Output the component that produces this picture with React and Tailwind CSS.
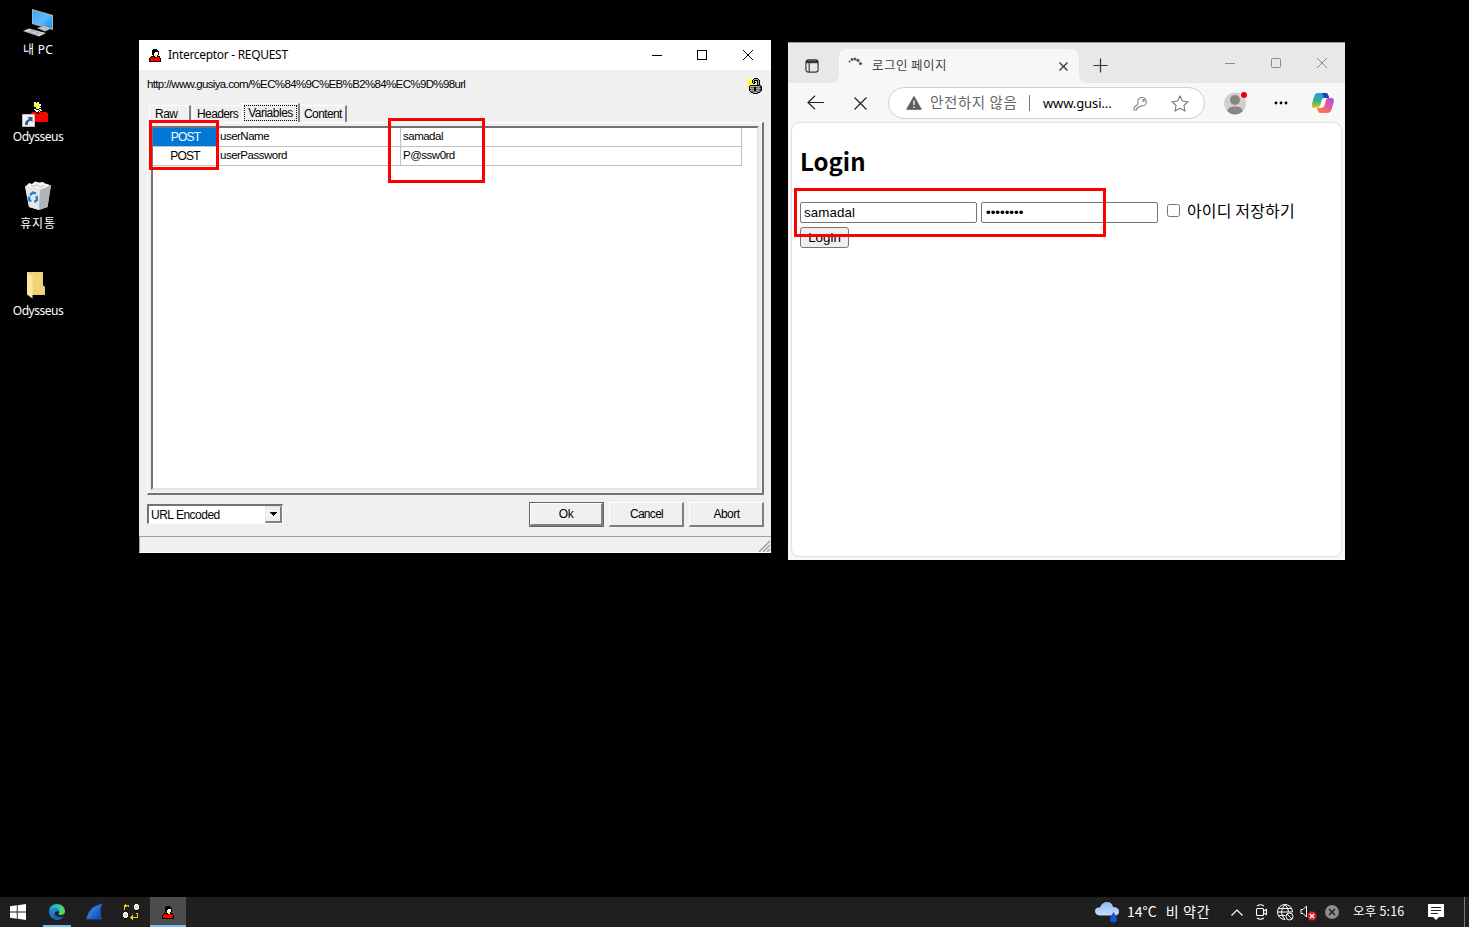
import React from "react";

const PALETTE = {
  k: "#000000",
  r: "#ff0000",
  y: "#ffff00",
  w: "#ffffff",
  g: "#a9a9a9",
  d: "#6e6e6e",
  c: "#e8dfb8",
  o: "#f0c419",
};

function Pixels({ rows, className }) {
  return (
    <svg
      className={className}
      width={rows[0].length}
      height={rows.length}
      viewBox={`0 0 ${rows[0].length} ${rows.length}`}
      shapeRendering="crispEdges"
    >
      {rows.flatMap((row, y) =>
        row.split("").map((ch, x) =>
          PALETTE[ch] ? <rect key={`${x}-${y}`} x={x} y={y} width="1" height="1" fill={PALETTE[ch]} /> : null
        )
      )}
    </svg>
  );
}

const PERSON = [
  "....kkkk....",
  "...kkkkkk...",
  "...kkkkkkk..",
  "...kkkwwwk..",
  "...kkwwwwk..",
  "...kkwywwk..",
  "....kwyyk...",
  "..kkkkyykkk.",
  ".krrrkkrrrk.",
  "krrrrrrrrrrk",
  "krrrrrrrrrrk",
  "krrrrrrrrrrk",
  "kkkkkkkkkkkk",
];

const LOCK = [
  "...y...kkkk....",
  "y..y..kggggk...",
  ".y.y.kgkkkkgk..",
  "..yyykgkyykgk..",
  ".yyyykgkk.kgk..",
  "yyyyyykk..kgk..",
  "..yyyyy...kgk..",
  ".y.kkkkkkkkkkk.",
  "y.kggggggggggdk",
  "..kddddkkddddkk",
  "..kggggkkggggdk",
  "..kddddkkddddkk",
  "..kggggkkgggddk",
  "...kdddddddddk.",
  "....kkggggdkk..",
  "......kkkkk....",
];

const PROXY = [
  "..o.........www.",
  ".ooooo.....wcccw",
  ".ooo.o.....wcccw",
  ".o.........wcccw",
  ".o.........wcccw",
  ".o..........wcw.",
  "............kkk.",
  "................",
  ".www............",
  "wcccw........oo.",
  "wcccw.........o.",
  "wcccw....o....o.",
  "wcccw...oo....o.",
  ".wcw...oooooooo.",
  ".kkk....oo......",
  ".........o......",
];

const HERO = [
  "....ww.ww.........",
  "....wwyyw.........",
  "....yywyyww.......",
  "....yyyyyww.......",
  "....wyyyyy........",
  "......yywww.......",
  "......yyw.........",
  "....ww...ww.......",
  ".....wwww.ww......",
  "......ww.w........",
  "..rrrr...rrrrrrrr.",
  ".rrrrrr..rrrrrrrrr",
  "rrrrrrrrrrrrrrrrrr",
  "rrrrrrrrrrrrrrrrrr",
  "rrrrrrrrrrrrrrrrrr",
  "rrrrrrrrrrrrrrrrrr",
  "rrrrrrrrrrrrrrrrrr",
  "rrrrrrrrrrrrrrrrrr",
  "rrrrrrrrrrrrrrrrrr",
  "rrrrrrrrrrrrrrrrrr",
];

function PcIcon() {
  return (
    <svg width="32" height="30" viewBox="22 8 32 30">
      <defs>
        <linearGradient id="scr" x1="0" y1="0" x2="1" y2="1">
          <stop offset="0" stopColor="#3aa0f0" />
          <stop offset="0.5" stopColor="#5cbcff" />
          <stop offset="1" stopColor="#1d8ee8" />
        </linearGradient>
      </defs>
      <path d="M32 9L53 15V30L32 24Z" fill="#9fb4c4" />
      <path d="M33 10.5L52 16V28.5L33 23Z" fill="url(#scr)" />
      <path d="M37 28l7-2 7 2.500-6 3z" fill="#b9c0c6" />
      <path d="M23 31l6-2.500 17 4.500-7 3.500z" fill="#d5d8db" />
      <path d="M26 31.500l13 3.500M29 30l13 3.500M29 33l5-2.500M34 34.500l5-2.500" stroke="#8f979d" strokeWidth=".6" />
    </svg>
  );
}

function BinIcon() {
  return (
    <svg width="28" height="30" viewBox="24 182 28 30">
      <path d="M25 187L51 186L47.500 208L39 211L29 208Z" fill="#cfd0d2" />
      <path d="M25 187L40 191L39 211L29 208Z" fill="#e6e7e8" />
      <path d="M40 191L51 186L47.500 208L39 211Z" fill="#b3b4b7" />
      <path d="M26 187l3-3 3 1 3-2.500 4 1 4-.5 2 1.500 4 1-1 2-8 3z" fill="#f3f4f4" />
      <path d="M31 186l3 1.500 3-2 3 3 4-2" stroke="#a3a6a9" strokeWidth=".8" fill="none" />
      <path d="M30 196l3-2.500 3 1M36.500 197l.5 4-2.500 2M31 202.500l-2-2 .5-3" stroke="#1583d8" strokeWidth="2.300" fill="none" />
    </svg>
  );
}

function FolderIcon() {
  return (
    <svg width="20" height="28" viewBox="26 271 20 28">
      <path d="M27 272H43V285L45 287V295H31Z" fill="#f0cc6c" />
      <path d="M32 273H42.500V294H32Z" fill="#f2d27a" />
      <path d="M27 272L32.500 276V298.500L27 294.500Z" fill="#ffe9a2" />
    </svg>
  );
}

function DesktopLabel({ children, className }) {
  return <span className={"whitespace-nowrap text-[12px] leading-[16px] text-white " + (className || "")}>{children}</span>;
}

const MS = "font-['Liberation_Sans',sans-serif] whitespace-nowrap text-black ";

function ClassicButton({ label, primary, spacing }) {
  return (
    <div className={"flex h-[25px] w-[75px] " + (primary ? "border border-[#646464]" : "")}>
      <div className={MS + "flex flex-1 items-center justify-center border-t border-l border-r-2 border-b-2 border-t-white border-l-white border-r-[#808080] border-b-[#808080] bg-[#f0f0f0] pb-px text-[12px] " + spacing}>
        {label}
      </div>
    </div>
  );
}

function Interceptor() {
  return (
    <section className="absolute left-[139px] top-[40px] flex h-[513px] w-[632px] flex-col bg-[#f0f0f0]">
      <header className="flex h-[30px] shrink-0 items-center bg-white pl-[10px]">
        <Pixels rows={PERSON} />
        <h1 className="ml-[7px] flex-1 whitespace-nowrap text-[12px] leading-[16px] tracking-[-0.3px] text-black">Interceptor - REQUEST</h1>
        <svg width="103" height="12" viewBox="0 0 103 12" className="mr-[17px]" fill="none" stroke="#000" shapeRendering="crispEdges">
          <path d="M1 6.500H11M46.500 1.500H55.500V10.500H46.500Z" />
          <path d="M92 1L102 11M102 1L92 11" shapeRendering="auto" />
        </svg>
      </header>
      <div className="flex h-[33px] shrink-0 items-center justify-between pl-[8px] pr-[9px]">
        <span className={MS + "-mt-[3px] text-[11.5px] tracking-[-0.64px]"}>http://www.gusiya.com/%EC%84%9C%EB%B2%84%EC%9D%98url</span>
        <Pixels rows={LOCK} className="-mt-px" />
      </div>
      <nav className="flex h-[19px] shrink-0 items-end pl-[10px] text-[12px]">
        <div className={MS + "flex h-[17px] w-[42px] items-center border-l border-r-2 border-t border-l-white border-t-white border-r-[#808080] pl-[5px] tracking-[-0.5px]"}>Raw</div>
        <div className={MS + "ml-px flex h-[17px] w-[50px] items-center border-l border-t border-white pl-[4px] tracking-[-0.6px]"}>Headers</div>
        <div className="flex h-[19px] w-[58px] border-l border-r-2 border-t border-l-white border-r-[#808080] border-t-white p-px">
          <div className={MS + "flex h-[16px] flex-1 items-center justify-center border border-dotted border-black pb-px tracking-[-0.5px]"}>Variables</div>
        </div>
        <div className={MS + "flex h-[17px] w-[47px] items-center border-r-2 border-t border-r-[#808080] border-t-white pl-[4px] tracking-[-0.6px]"}>Content</div>
      </nav>
      <div className="ml-[8px] flex h-[373px] w-[617px] shrink-0 border-b-2 border-l border-r-2 border-t border-b-[#737373] border-l-white border-r-[#737373] border-t-white p-[3px]">
        <div className="flex flex-1 flex-col border-2 border-b-[#e3e3e3] border-l-[#737373] border-r-[#e3e3e3] border-t-[#737373] bg-white">
          {[
            ["userName", "samadal", true],
            ["userPassword", "P@ssw0rd", false],
          ].map(([name, value, selected]) => (
            <div key={name} className={MS + "flex h-[19px] w-[589px] border-b border-r border-[#c0c0c0] text-[11.5px]"}>
              <div className={"flex w-[64px] items-center justify-center pl-px text-[12px] tracking-[-0.8px] " + (selected ? "bg-[#0078d7] text-white" : "border-r border-[#c0c0c0]")}>POST</div>
              <div className="flex w-[184px] items-center border-r border-[#c0c0c0] pl-[3px] tracking-[-0.5px]">{name}</div>
              <div className="flex items-center pl-[2px] tracking-[-0.5px]">{value}</div>
            </div>
          ))}
        </div>
      </div>
      <div className="flex h-[41px] shrink-0 items-start pl-[8px] pt-[7px]">
        <div className="mt-[2px] flex h-[20px] w-[136px] border-b border-l-2 border-r border-t-2 border-b-white border-l-[#737373] border-r-white border-t-[#737373] bg-white">
          <span className={MS + "flex flex-1 items-center pl-[2px] text-[12px] tracking-[-0.5px]"}>URL Encoded</span>
          <span className="flex w-[17px] items-center justify-center border-b-2 border-l border-r-2 border-t border-b-[#808080] border-l-[#e3e3e3] border-r-[#808080] border-t-[#e3e3e3] bg-[#f0f0f0]">
            <svg width="7" height="4" viewBox="0 0 7 4" shapeRendering="crispEdges"><path d="M0 0H7V1H6V2H5V3H4V4H3V3H2V2H1V1H0Z" /></svg>
          </span>
        </div>
        <div className="ml-[246px] flex gap-[5px]">
          <ClassicButton label="Ok" primary spacing="tracking-[-0.5px]" />
          <ClassicButton label="Cancel" spacing="tracking-[-0.7px] pl-px" />
          <ClassicButton label="Abort" spacing="tracking-[-0.5px] pl-px" />
        </div>
      </div>
      <footer className="flex h-[17px] items-end justify-end border-b border-l border-t border-b-white border-l-[#a0a0a0] border-t-[#a0a0a0]">
        <svg width="13" height="12" viewBox="0 0 13 12" stroke="#a0a0a0" strokeWidth="1.500"><path d="M1 12L12 1M5 12L12 5M9 12L12 9" /></svg>
      </footer>
    </section>
  );
}

function CopilotIcon() {
  return (
    <svg width="24" height="22" viewBox="0 0 24 22">
      <defs>
        <linearGradient id="cpa" x1="0" y1="0" x2="0" y2="1">
          <stop offset="0" stopColor="#1c9cf0" /><stop offset=".55" stopColor="#35b27d" /><stop offset="1" stopColor="#f3c914" />
        </linearGradient>
        <linearGradient id="cpb" x1="1" y1="0" x2="0" y2="1">
          <stop offset="0" stopColor="#a64df0" /><stop offset=".5" stopColor="#ef5a86" /><stop offset="1" stopColor="#ff8a35" />
        </linearGradient>
      </defs>
      <path d="M7 1H15Q17 1 18 6H13Q11 6 10 10L9 14Q8 16 5 16H3Q0 16 1 12L3 5Q4 1 7 1Z" fill="url(#cpa)" />
      <path d="M11 1H15Q17 1 18 6H13Z" fill="#1946b9" />
      <path d="M17 6H20Q24 6 22.500 11L21 16Q20 21 16 21H9Q7 21 6 16H10Q13 16 14 12L15 8Q15.500 6 17 6Z" fill="url(#cpb)" />
    </svg>
  );
}

function Browser() {
  return (
    <section className="absolute left-[788px] top-[42px] flex h-[518px] w-[557px] flex-col bg-[#f7f7f7] font-['Noto_Sans','Noto_Sans_CJK_KR',sans-serif]">
      <header className="flex h-[41px] shrink-0 items-end border-t border-[#9b9b9b] bg-[#f7f7f7]">
        <div className="flex h-[40px] w-[51px] items-center rounded-br-[8px] bg-[#e8e8e8] pl-[17px] pt-[6px]">
          <svg width="14" height="14" viewBox="0 0 15 15" fill="none" stroke="#333" strokeWidth="1.200">
            <rect x="1" y="1" width="13" height="13" rx="2.500" /><path d="M1 3H14" strokeWidth="3" /><path d="M4.500 4V14" />
          </svg>
        </div>
        <div className="flex h-[40px] w-[240px] bg-[#e8e8e8] pt-[6px]">
          <div className="flex flex-1 items-center rounded-t-[8px] bg-[#f7f7f7] pl-[9px]">
            <svg width="16" height="16" viewBox="0 0 16 16" className="-mt-[2px]" fill="#555">
              <circle cx="1.500" cy="4.500" r="1" /><circle cx="4" cy="2.500" r="1.400" /><circle cx="7" cy="2" r="1.500" /><circle cx="10" cy="3.300" r="1.600" /><circle cx="12.500" cy="6.500" r="1.600" />
            </svg>
            <span className="-mt-[2px] ml-[8px] flex-1 whitespace-nowrap font-['Noto_Sans_CJK_KR'] text-[12.500px] leading-[16px] tracking-[0.45px] text-[#444]">로그인 페이지</span>
            <svg width="9" height="9" viewBox="0 0 9 9" className="mr-[11px]" stroke="#333" strokeWidth="1.200"><path d="M.5.5L8.500 8.500M8.500.5L.5 8.500" /></svg>
          </div>
        </div>
        <div className="flex h-[40px] flex-1 items-center rounded-bl-[8px] bg-[#e8e8e8] pl-[14px]">
          <svg width="15" height="15" viewBox="0 0 15 15" className="mt-[5px]" stroke="#333" strokeWidth="1.200"><path d="M7.500.5V14.500M.5 7.500H14.500" /></svg>
          <svg width="104" height="12" viewBox="0 0 104 12" className="ml-[117px]" fill="none" stroke="#8a8a8a">
            <path d="M0 6.500H10" /><rect x="46.500" y="1.500" width="9" height="9" rx="1" /><path d="M92 1L102 11M102 1L92 11" />
          </svg>
        </div>
      </header>
      <div className="flex h-[40px] shrink-0 items-center pl-[19px]">
        <svg width="18" height="15" viewBox="0 0 18 15" className="-mt-px" fill="none" stroke="#222" strokeWidth="1.200"><path d="M17 7.500H1M8 .8L1 7.500L8 14.200" /></svg>
        <svg width="13" height="13" viewBox="0 0 13 13" className="ml-[29px]" stroke="#222" strokeWidth="1.200"><path d="M.5.5L12.500 12.500M12.500.5L.5 12.500" /></svg>
        <div className="ml-[21px] flex h-[32px] w-[317px] items-center rounded-full border border-[#d0d0d0] bg-white pl-[17px]">
          <svg width="16" height="14" viewBox="0 0 16 14"><path d="M8 .5L15.300 13.300H.7Z" fill="#5f5f5f" stroke="#5f5f5f" strokeLinejoin="round" /><path d="M8 4.500V9M8 10.500V12" stroke="#fff" strokeWidth="1.300" /></svg>
          <span className="-mt-[2px] ml-[8px] w-[99px] whitespace-nowrap font-['Noto_Sans_CJK_KR'] text-[14.500px] leading-[18px] tracking-[0.6px] text-[#666]">안전하지 않음</span>
          <span className="h-[16px] w-px bg-[#777]" />
          <span className="ml-[13px] w-[90px] whitespace-nowrap text-[13px] leading-[18px] tracking-[-0.1px] text-black">www.gusi...</span>
          <svg width="15" height="15" viewBox="0 0 15 15" fill="none" stroke="#888" strokeWidth="1.100">
            <path d="M5.200 7.600A4.300 4.300 0 1 1 7.600 9.800L6.500 10.800H5V12.300H3.500V14H1V11.500Z" strokeLinejoin="round" /><circle cx="10.500" cy="4.500" r=".9" />
          </svg>
          <svg width="18" height="17" viewBox="0 0 18 17" className="ml-[23px]" fill="none" stroke="#777" strokeWidth="1.100" strokeLinejoin="round">
            <path d="M9 1L11.400 6L17 6.700L12.900 10.500L14 16L9 13.300L4 16L5.100 10.500L1 6.700L6.600 6Z" />
          </svg>
        </div>
        <svg width="24" height="24" viewBox="0 0 24 24" className="ml-[18px]">
          <circle cx="12" cy="12.500" r="11" fill="#d2d0ce" /><circle cx="12" cy="9" r="5" fill="#8a8583" /><path d="M4.500 20.500Q4.500 15.500 12 15.500T19.500 20.500Q16 23.500 12 23.500T4.500 20.500Z" fill="#8a8583" />
          <circle cx="21" cy="4" r="3.600" fill="#f7f7f7" /><circle cx="21" cy="4" r="3" fill="#e80010" />
        </svg>
        <svg width="14" height="4" viewBox="0 0 14 4" className="ml-[27px]"><circle cx="2" cy="2" r="1.400" /><circle cx="7" cy="2" r="1.400" /><circle cx="12" cy="2" r="1.400" /></svg>
        <span className="ml-[23px]"><CopilotIcon /></span>
      </div>
      <main className="mx-[4px] h-[433px] rounded-[7px] bg-white px-[8px] pt-[20px] shadow-[0_0_2px_rgba(0,0,0,0.3)]">
        <h2 className="h-[35px] whitespace-nowrap font-['Noto_Sans_CJK_KR'] text-[24px] font-bold leading-[35px] text-black">Login</h2>
        <div className="mt-[23px] flex h-[23px] items-center text-black">
          <div className="flex h-[21px] w-[177px] items-center rounded-[2px] border border-[#767676] pl-[3px] font-['Liberation_Sans'] text-[13.33px] tracking-[0.1px]">samadal</div>
          <div className="ml-[4px] flex h-[21px] w-[177px] items-center rounded-[2px] border border-[#767676] pl-[4px] font-['Liberation_Sans'] text-[13.33px]">••••••••</div>
          <div className="mb-[4px] ml-[9px] h-[13px] w-[13px] rounded-[2.5px] border border-[#767676]" />
          <span className="mb-[5px] ml-[7px] whitespace-nowrap font-['Noto_Sans_CJK_KR'] text-[16px] leading-[22px] tracking-[0.15px]">아이디 저장하기</span>
        </div>
        <div className="mt-[3px] flex h-[21px] w-[49px] items-center justify-center rounded-[3px] border border-[#767676] bg-[#efefef] font-['Liberation_Sans'] text-[13.33px] text-black">Login</div>
      </main>
    </section>
  );
}

function EdgeIcon() {
  return (
    <svg width="18" height="18" viewBox="0 0 18 18" className="mt-[2px]">
      <defs>
        <linearGradient id="ea" x1="0" y1="0" x2="1" y2=".3"><stop offset="0" stopColor="#1fa5e0" /><stop offset=".6" stopColor="#2cc6b0" /><stop offset="1" stopColor="#63d84e" /></linearGradient>
        <linearGradient id="eb" x1="0" y1="0" x2="0" y2="1"><stop offset="0" stopColor="#1b8fe0" /><stop offset="1" stopColor="#1667c4" /></linearGradient>
      </defs>
      <path d="M1 8Q2 1 9 1T17 8Q17 12 12.500 12Q10 12 10.500 10.500Q12 8.500 10 6.500Q5 3.500 1 8Z" fill="url(#ea)" />
      <path d="M1 8Q4 4 8 5.500Q11 6.500 11 8.500Q6.500 7.500 6.500 11.500Q7.500 16 12 15.500Q10 17.500 7.500 16.800Q1 15 1 8Z" fill="url(#eb)" />
      <path d="M6.500 10Q7.500 13.500 11.500 14Q14 14.300 16 13Q13 17.500 9 17Q4.500 15.500 6.500 10Z" fill="#1d5fb8" />
    </svg>
  );
}

function Taskbar() {
  return (
    <footer className="absolute left-0 top-[897px] flex h-[30px] w-[1469px] items-center bg-[#1f1f1f] font-['Noto_Sans','Noto_Sans_CJK_KR',sans-serif]">
      <svg width="16" height="16" viewBox="0 0 16 16" className="ml-[10px]" fill="#fff"><path d="M0 2.200L6.800 1.300V7.500H0ZM7.700 1.200L16 0V7.500H7.700ZM0 8.400H6.800V14.700L0 13.800ZM7.700 8.400H16V16L7.700 14.800Z" /></svg>
      <div className="ml-[17px] flex h-[30px] w-[28px] items-center justify-center border-b-2 border-[#76b9ed]"><EdgeIcon /></div>
      <svg width="17" height="17" viewBox="0 0 17 17" className="-mt-px ml-[15px]">
        <defs><linearGradient id="fin" x1="0" y1="0" x2="1" y2="1"><stop offset="0" stopColor="#4b9cf5" /><stop offset="1" stopColor="#0b3fb5" /></linearGradient></defs>
        <path d="M.5 16Q3.500 3 16 1Q12.500 8 15.500 16Z" fill="url(#fin)" stroke="#2468c8" strokeWidth=".6" />
      </svg>
      <Pixels rows={PROXY} className="ml-[20px]" />
      <div className="ml-[11px] flex h-[30px] w-[36px] items-center justify-center border-b-2 border-[#76b9ed] bg-[#4c4c4c] pt-[2px]"><Pixels rows={PERSON} /></div>
      <svg width="24" height="22" viewBox="0 0 24 22" className="ml-[909px]">
        <defs><linearGradient id="cl" x1="0" y1="0" x2="0" y2="1"><stop offset="0" stopColor="#8db9f7" /><stop offset="1" stopColor="#c9dcfb" /></linearGradient></defs>
        <path d="M5 14.500Q0 14 0 10T5 6.500Q7 1 12 1T18 6Q24 6 24 10.500T19 14.500Z" fill="url(#cl)" />
        <path d="M18.500 11Q22 16 22 18.500Q22 21.500 18.500 21.500T15 18.500Q15 16 18.500 11Z" fill="#1454d8" />
      </svg>
      <span className="-mt-[3px] ml-[8px] w-[104px] whitespace-nowrap font-['Noto_Sans_CJK_KR'] text-[14px] leading-[18px] text-white">14°C<span className="ml-[9px] tracking-[0.7px]">비 약간</span></span>
      <svg width="12" height="7" viewBox="0 0 12 7" fill="none" stroke="#fff" strokeWidth="1.200"><path d="M.5 6.500L6 1L11.500 6.500" /></svg>
      <svg width="13" height="16" viewBox="0 0 13 16" className="ml-[12px]" fill="none" stroke="#fff" strokeWidth="1.100">
        <rect x="1.500" y="4.500" width="7" height="7" rx="1" /><path d="M8.500 7L11.500 5.500V10.500L8.500 9M2 2Q5.500-.5 9 2M2 14Q5.500 16.500 9 14" />
      </svg>
      <svg width="17" height="17" viewBox="0 0 17 17" className="ml-[9px]" fill="none" stroke="#fff" strokeWidth="1">
        <path d="M8 15.500A7.500 7.500 0 1 1 15.500 8M8 .5Q4.500 4 4.500 8T8 15.500M8 .5Q11.500 4 11.500 8M1.500 4.500H14.500M.5 8H15.500M1.500 11.500H8.500" /><circle cx="12.500" cy="12.500" r="3.500" /><path d="M10 10L15 15" />
      </svg>
      <svg width="17" height="17" viewBox="0 0 17 17" className="ml-[6px]" fill="none" stroke="#fff">
        <path d="M1 5.500H3L6.500 2V13L3 9.500H1Z" /><circle cx="12" cy="12" r="4.500" fill="#e02128" stroke="none" /><path d="M10 10L14 14M14 10L10 14" strokeWidth="1.200" />
      </svg>
      <svg width="14" height="14" viewBox="0 0 14 14" className="ml-[8px]"><circle cx="7" cy="7" r="7" fill="#8c8c8c" /><path d="M4 4L10 10M10 4L4 10" stroke="#222" strokeWidth="1.500" /></svg>
      <span className="-mt-[2px] ml-[14px] w-[75px] whitespace-nowrap font-['Noto_Sans_CJK_KR'] text-[12.500px] leading-[16px] tracking-[0.2px] text-white">오후 5:16</span>
      <svg width="16" height="16" viewBox="0 0 16 16"><path d="M0 0H16V13H11L8 16L5 13H0Z" fill="#fff" /><path d="M3 3.500H13M3 6.500H13M3 9.500H10" stroke="#222" /></svg>
      <span className="ml-[20px] h-[30px] w-px bg-[#777]" />
    </footer>
  );
}

export default function App() {
  return (
    <div className="relative h-[927px] w-[1469px] overflow-hidden bg-black font-['Noto_Sans','Noto_Sans_CJK_KR',sans-serif]">
      <div className="flex w-[76px] flex-col items-center">
        <div className="flex h-[101px] flex-col items-center pt-[8px]"><PcIcon /><DesktopLabel className="mt-[4px] tracking-[0.3px]">내 PC</DesktopLabel></div>
        <div className="flex h-[80px] flex-col items-center">
          <div className="relative flex h-[26px] w-[32px] justify-end pr-[6px]">
            <Pixels rows={HERO} className="mt-px" />
            <svg width="13" height="13" viewBox="0 0 13 13" className="absolute bottom-0 left-0"><rect width="13" height="13" fill="#f4f4f4" stroke="#888" /><path d="M3 11Q2.500 6.500 7 5L5.500 3H10.500V8L8.800 6.800Q5.500 7.500 6 11Z" fill="#2d5fa8" /></svg>
          </div>
          <DesktopLabel className="mt-[2px] tracking-[-0.5px]">Odysseus</DesktopLabel>
        </div>
        <div className="flex h-[88px] flex-col items-center"><BinIcon /><DesktopLabel className="mt-[5px] tracking-[0.8px]">휴지통</DesktopLabel></div>
        <div className="flex flex-col items-center pt-[2px]"><span className="mr-[4px] block h-[28px]"><FolderIcon /></span><DesktopLabel className="mt-[4px] tracking-[-0.5px]">Odysseus</DesktopLabel></div>
      </div>
      <Interceptor />
      <Browser />
      <div className="absolute left-[149px] top-[120px] h-[50px] w-[70px] border-3 border-[#ff0000]" />
      <div className="absolute left-[388px] top-[118px] h-[65px] w-[97px] border-3 border-[#ff0000]" />
      <div className="absolute left-[794px] top-[188px] h-[49px] w-[312px] border-3 border-[#ff0000]" />
      <Taskbar />
    </div>
  );
}
